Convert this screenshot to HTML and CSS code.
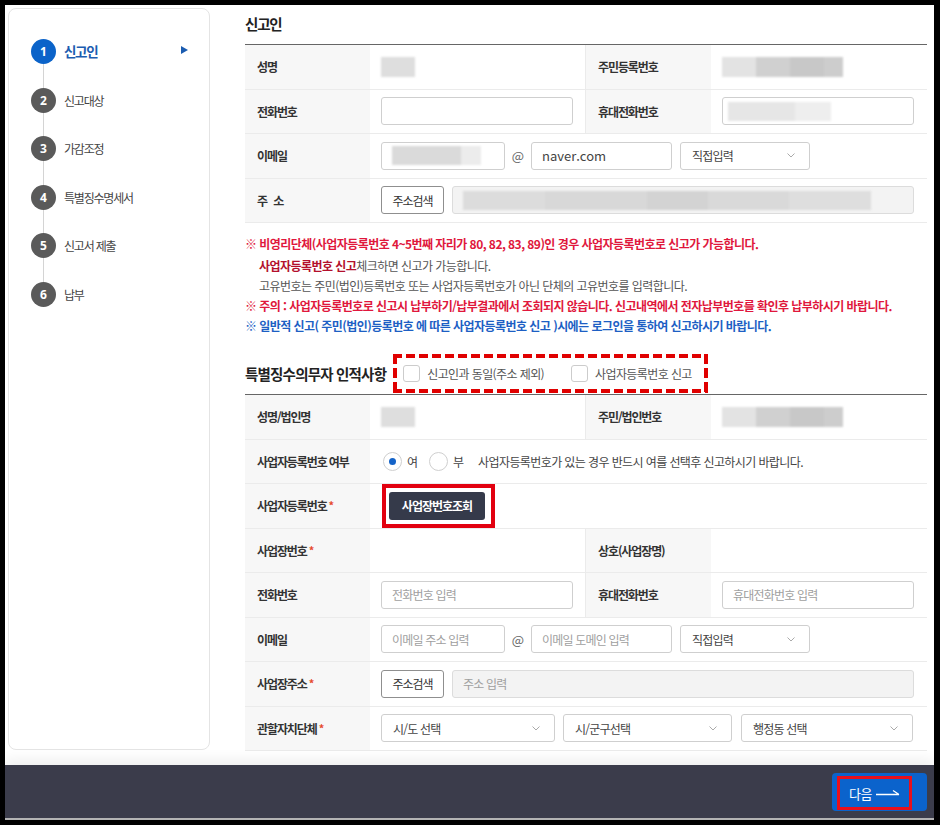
FILE: index.html
```html
<!DOCTYPE html>
<html lang="ko">
<head>
<meta charset="utf-8">
<title>신고인</title>
<link rel="stylesheet" href="styles.css">
</head>
<body>
<div class="frame">
  <div class="content">
    <aside class="sidebar">
      <ol class="steps">
        <li class="step active"><span class="num">1</span><span class="label">신고인</span><span class="arrow"></span></li>
        <li class="step"><span class="num">2</span><span class="label">신고대상</span></li>
        <li class="step"><span class="num">3</span><span class="label">가감조정</span></li>
        <li class="step"><span class="num">4</span><span class="label">특별징수명세서</span></li>
        <li class="step"><span class="num">5</span><span class="label">신고서 제출</span></li>
        <li class="step"><span class="num">6</span><span class="label">납부</span></li>
      </ol>
    </aside>
    <main class="main">
      <h2 class="sec-title">신고인</h2>
      <div class="form-table">
        <div class="th">성명</div>
        <div class="td"><div class="blur blur-name"></div></div>
        <div class="th mid">주민등록번호</div>
        <div class="td"><div class="blur blur-id"></div></div>

        <div class="th">전화번호</div>
        <div class="td"><div class="input w192"></div></div>
        <div class="th mid">휴대전화번호</div>
        <div class="td"><div class="input w192"><div class="blur blur-mobile"></div></div></div>

        <div class="th">이메일</div>
        <div class="td span3">
          <div class="input w124"><div class="blur blur-mail"></div></div>
          <span class="at">@</span>
          <div class="input w141 val">naver.com</div>
          <div class="select w130"><span>직접입력</span><svg class="chev" width="8" height="5" viewBox="0 0 8 5"><polyline points="0.5,0.5 4,4 7.5,0.5" fill="none" stroke="#aaa" stroke-width="1"/></svg></div>
        </div>

        <div class="th spaced">주 소</div>
        <div class="td span3">
          <div class="btn-line">주소검색</div>
          <div class="input disabled w462"><div class="blur blur-addr"></div></div>
        </div>
      </div>

      <div class="notes">
        <p class="red first">※ 비영리단체(사업자등록번호 4~5번째 자리가 80, 82, 83, 89)인 경우 사업자등록번호로 신고가 가능합니다.</p>
        <p class="indent gray"><span class="dark-red">사업자등록번호 신고</span>체크하면 신고가 가능합니다.</p>
        <p class="indent gray">고유번호는 주민(법인)등록번호 또는 사업자등록번호가 아닌 단체의 고유번호를 입력합니다.</p>
        <p class="red">※ 주의 : 사업자등록번호로 신고시 납부하기/납부결과에서 조회되지 않습니다. 신고내역에서 전자납부번호를 확인후 납부하시기 바랍니다.</p>
        <p class="blue">※ 일반적 신고( 주민(법인)등록번호 에 따른 사업자등록번호 신고 )시에는 로그인을 통하여 신고하시기 바랍니다.</p>
      </div>

      <div class="sec-head">
        <h2 class="sec-title2">특별징수의무자 인적사항</h2>
        <div class="dash-box">
          <span class="checkbox"></span><span class="chk-label">신고인과 동일(주소 제외)</span>
          <span class="checkbox second"></span><span class="chk-label">사업자등록번호 신고</span>
        </div>
      </div>

      <div class="form-table">
        <div class="th">성명/법인명</div>
        <div class="td"><div class="blur blur-name"></div></div>
        <div class="th mid">주민/법인번호</div>
        <div class="td"><div class="blur blur-id"></div></div>

        <div class="th">사업자등록번호 여부</div>
        <div class="td span3">
          <span class="radio on"></span><span class="radio-label">여</span>
          <span class="radio"></span><span class="radio-label">부</span>
          <span class="hint">사업자등록번호가 있는 경우 반드시 여를 선택후 신고하시기 바랍니다.</span>
        </div>

        <div class="th">사업자등록번호<span class="req">*</span></div>
        <div class="td span3 tight">
          <div class="red-box"><button class="btn-dark" type="button">사업장번호조회</button></div>
        </div>

        <div class="th">사업장번호<span class="req">*</span></div>
        <div class="td"></div>
        <div class="th mid">상호(사업장명)</div>
        <div class="td"></div>

        <div class="th">전화번호</div>
        <div class="td"><div class="input w192">전화번호 입력</div></div>
        <div class="th mid">휴대전화번호</div>
        <div class="td"><div class="input w192">휴대전화번호 입력</div></div>

        <div class="th">이메일</div>
        <div class="td span3">
          <div class="input w124">이메일 주소 입력</div>
          <span class="at">@</span>
          <div class="input w141">이메일 도메인 입력</div>
          <div class="select w130"><span>직접입력</span><svg class="chev" width="8" height="5" viewBox="0 0 8 5"><polyline points="0.5,0.5 4,4 7.5,0.5" fill="none" stroke="#aaa" stroke-width="1"/></svg></div>
        </div>

        <div class="th">사업장주소<span class="req">*</span></div>
        <div class="td span3">
          <div class="btn-line">주소검색</div>
          <div class="input disabled w462">주소 입력</div>
        </div>

        <div class="th">관할자치단체<span class="req">*</span></div>
        <div class="td span3">
          <div class="select w174"><span>시/도 선택</span><svg class="chev" width="8" height="5" viewBox="0 0 8 5"><polyline points="0.5,0.5 4,4 7.5,0.5" fill="none" stroke="#aaa" stroke-width="1"/></svg></div>
          <div class="select w169"><span>시/군구선택</span><svg class="chev" width="8" height="5" viewBox="0 0 8 5"><polyline points="0.5,0.5 4,4 7.5,0.5" fill="none" stroke="#aaa" stroke-width="1"/></svg></div>
          <div class="select w172"><span>행정동 선택</span><svg class="chev" width="8" height="5" viewBox="0 0 8 5"><polyline points="0.5,0.5 4,4 7.5,0.5" fill="none" stroke="#aaa" stroke-width="1"/></svg></div>
        </div>
      </div>
    </main>
  </div>
  <div class="bottom-bar">
    <button class="next" type="button"><span class="annot">다음<svg width="24" height="8" viewBox="0 0 24 8"><path d="M0 6.5 H23 M17 2.5 L23 6.5" fill="none" stroke="#fff" stroke-width="1.3"/></svg></span></button>
  </div>
</div>
</body>
</html>
```

FILE: styles.css
```css
* { box-sizing: border-box; }
html, body { margin: 0; padding: 0; background: #000; }
body {
  font-family: "Noto Sans CJK KR", "Noto Sans", sans-serif;
  font-size: 12px;
  color: #333;
}

.frame {
  margin: 5px 0 0 5px;
  width: 929px;
  height: 815px;
  background: #fff;
  display: flex;
  flex-direction: column;
  overflow: hidden;
}

.content {
  height: 760px;
  flex: none;
  display: flex;
  align-items: flex-start;
  overflow: hidden;
}

/* Sidebar */
.sidebar {
  margin: 3px 0 0 3px;
  width: 202px;
  height: 742px;
  flex: none;
  border: 1px solid #e4e4e4;
  border-radius: 8px;
  padding: 30px 21px 0 22px;
}
.steps { list-style: none; margin: 0; padding: 0; }
.step {
  height: 48.5px;
  display: flex;
  align-items: flex-start;
  position: relative;
}
.step:not(:last-child)::before {
  content: "";
  position: absolute;
  left: 12px;
  top: 25px;
  width: 1px;
  height: 24px;
  background: #d4d4d4;
}
.step .num {
  width: 25px;
  height: 25px;
  flex: none;
  border-radius: 50%;
  background: #5a5a5a;
  color: #fff;
  font-family: "Noto Sans", sans-serif;
  font-weight: 700;
  font-size: 12px;
  display: flex;
  align-items: center;
  justify-content: center;
  position: relative;
  z-index: 1;
}
.step .label {
  margin-left: 8px;
  line-height: 25px;
  font-size: 12px;
  color: #444;
  letter-spacing: -1.2px;
}
.step.active .num { background: #0b63c9; }
.step.active .label {
  color: #1b5cb0;
  font-weight: 700;
  font-size: 13.5px;
  letter-spacing: -1.3px;
}
.step .arrow {
  margin-left: auto;
  margin-top: 7px;
  width: 0;
  height: 0;
  border-left: 7px solid #1b5cb0;
  border-top: 4.5px solid transparent;
  border-bottom: 4.5px solid transparent;
}

/* Main */
.main {
  margin-left: 35px;
  width: 682px;
  flex: none;
}
.sec-title {
  margin: 0;
  padding: 9px 0 10px;
  font-size: 14.5px;
  line-height: 20px;
  font-weight: 700;
  color: #222;
  letter-spacing: -1.2px;
}

.form-table {
  display: grid;
  grid-template-columns: 125px 215px 126px 216px;
  grid-auto-rows: 44.5px;
  border-top: 1px solid #666;
}
.th {
  background: #f7f7f7;
  padding-left: 12px;
  display: flex;
  align-items: center;
  font-weight: 700;
  color: #333;
  letter-spacing: -1.1px;
  border-bottom: 1px solid #ebebeb;
}
.th.spaced { word-spacing: 4px; }
.th.mid { border-left: 1px solid #ebebeb; }
.td {
  padding-left: 11px;
  display: flex;
  align-items: center;
  border-bottom: 1px solid #ebebeb;
}
.td.tight { padding-left: 12px; }
.span3 { grid-column: span 3; }

.req {
  color: #e64a2e;
  font-size: 11px;
  margin-left: 2px;
  align-self: flex-start;
  margin-top: 13px;
}

.input, .select {
  height: 28px;
  border: 1px solid #cfcfcf;
  border-radius: 3px;
  background: #fff;
  display: flex;
  align-items: center;
  padding: 0 10px;
  color: #a0a0a0;
  letter-spacing: -0.8px;
  flex: none;
}
.input.val { color: #444; font-size: 13px; letter-spacing: 0; }
.input.disabled { background: #f3f3f3; border-color: #dcdcdc; }
.select {
  justify-content: space-between;
  color: #444;
  padding: 0 14px 0 11px;
  margin-left: 8px;
}
.select.w174 { margin-left: 0; }
.select.w172 { margin-left: 9px; }
.chev { display: block; }

.w124 { width: 124px; }
.w130 { width: 130px; }
.w141 { width: 141px; }
.w169 { width: 169px; }
.w172 { width: 172px; }
.w174 { width: 174px; }
.w192 { width: 192px; }
.w462 { width: 462px; }

.at {
  width: 26px;
  text-align: center;
  color: #666;
  font-size: 13px;
}

.btn-line {
  width: 63px;
  height: 28px;
  border: 1px solid #8f8f8f;
  border-radius: 3px;
  display: flex;
  align-items: center;
  justify-content: center;
  color: #333;
  letter-spacing: -1px;
  margin-right: 8px;
  flex: none;
}

/* blurred personal data */
.blur { filter: blur(1px); flex: none; }
.blur-name { width: 34px; height: 20px; background: #dedede; }
.blur-id {
  width: 121px;
  height: 20px;
  background: linear-gradient(90deg, #e3e3e3 0 28%, #d0d0d0 28% 56%, #c8c8c8 56% 84%, #cdcdcd 84%);
}
.blur-mail {
  width: 89px;
  height: 19px;
  background: linear-gradient(90deg, #dadada 0 78%, #ececec 78%);
}
.blur-mobile {
  width: 103px;
  height: 19px;
  margin-left: -5px;
  background: linear-gradient(90deg, #e6e6e6 0 65%, #eeeeee 65%);
}
.blur-addr {
  width: 408px;
  height: 19px;
  background: linear-gradient(90deg, #dcdcdc 0 20%, #d8d8d8 20% 45%, #d3d3d3 45% 60%, #d9d9d9 60% 80%, #dedede 80%);
}

/* notes */
.notes {
  margin-top: 11px;
  font-size: 12px;
  line-height: 20px;
  letter-spacing: -0.55px;
}
.notes p { margin: 0; white-space: nowrap; }
.notes p.first { margin-bottom: 2px; }
.red { color: #e0173c; font-weight: 700; }
.dark-red { color: #b3102c; font-weight: 700; }
.gray { color: #555; }
.blue { color: #1d5fc4; font-weight: 700; }
.indent { padding-left: 14px; }

/* section 2 head */
.sec-head {
  margin-top: 18px;
  height: 40px;
  display: flex;
  align-items: flex-start;
}
.sec-title2 {
  margin: 0;
  font-size: 14.5px;
  line-height: 39px;
  font-weight: 700;
  color: #222;
  letter-spacing: -0.8px;
}
.dash-box {
  margin-left: 7px;
  width: 315px;
  height: 39px;
  display: flex;
  align-items: center;
  padding-left: 10px;
  background:
    repeating-linear-gradient(90deg, #e00000 0 9px, transparent 9px 13px) left top / 100% 4px no-repeat,
    repeating-linear-gradient(90deg, #e00000 0 9px, transparent 9px 13px) left bottom / 100% 4px no-repeat,
    repeating-linear-gradient(180deg, #e00000 0 10px, transparent 10px 14px) left top / 4px 100% no-repeat,
    repeating-linear-gradient(180deg, #e00000 0 10px, transparent 10px 14px) right top / 4px 100% no-repeat;
}
.checkbox {
  width: 17px;
  height: 17px;
  border: 1px solid #cccccc;
  border-radius: 3px;
  background: #fff;
  flex: none;
  margin-right: 7px;
}
.checkbox.second { margin-left: 27px; }
.chk-label { color: #555; letter-spacing: -0.6px; }

/* radios */
.radio {
  width: 19px;
  height: 19px;
  border: 1px solid #cfcfcf;
  border-radius: 50%;
  background: #fff;
  flex: none;
  display: flex;
  align-items: center;
  justify-content: center;
  margin-left: 2px;
}
.radio.on::after {
  content: "";
  width: 7px;
  height: 7px;
  border-radius: 50%;
  background: #1463c8;
}
.radio-label { margin: 0 9px 0 5px; color: #444; }
.hint { margin-left: 5px; color: #444; letter-spacing: -0.6px; }

/* red annotation around button */
.red-box {
  width: 113px;
  height: 44px;
  border: 4px solid #e2000f;
  padding: 4px 0 0 3px;
}
.btn-dark {
  width: 96px;
  height: 28px;
  background: #353a4a;
  color: #fff;
  border: none;
  border-radius: 3px;
  font-family: inherit;
  font-size: 12px;
  font-weight: 700;
  letter-spacing: -1px;
  padding: 0;
  display: block;
}

/* bottom bar */
.bottom-bar {
  height: 55px;
  flex: none;
  background: #3b3c4b;
  border-bottom: 2px solid #b3b3b3;
  display: flex;
  justify-content: flex-end;
  align-items: flex-start;
  padding: 8px 7px 0 0;
  box-shadow: 0 -6px 12px rgba(0, 0, 0, 0.06);
  position: relative;
}
.next {
  width: 95px;
  height: 38px;
  background: #0b63cc;
  border: none;
  border-radius: 4px;
  padding: 3px 15px 1px 5px;
  font-family: inherit;
}
.annot {
  display: flex;
  height: 34px;
  border: 3px solid #e8101c;
  align-items: center;
  justify-content: center;
  gap: 4px;
  color: #fff;
  font-size: 13px;
  letter-spacing: -0.5px;
}
.annot svg { display: block; margin-top: -2px; }
```
